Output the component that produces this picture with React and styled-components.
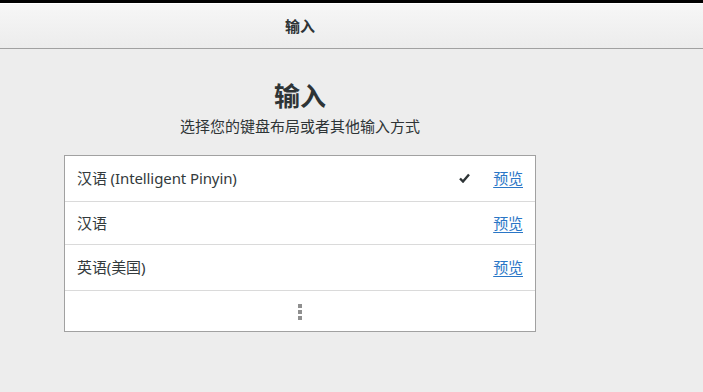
import React from "react";
import styled, { createGlobalStyle } from "styled-components";

const Global = createGlobalStyle`
  html, body { margin: 0; padding: 0; background: #ededed; }
  body { font-family: "Noto Sans", "Noto Sans CJK SC", sans-serif; color: #2e3436; }
`;

const Page = styled.div`
  width: 703px;
  height: 392px;
  display: flex;
  flex-direction: column;
  background: #ededed;
  border-top: 3px solid #000;
  box-sizing: border-box;
  overflow: hidden;
`;

const HeaderBar = styled.header`
  height: 45px;
  flex: none;
  display: flex;
  align-items: center;
  background: linear-gradient(#f7f7f7, #ececec);
  border-bottom: 1px solid #a1a1a1;
  box-shadow: inset 0 1px 0 #ffffff;
`;

const Column = styled.div`
  width: 600px;
  display: flex;
  flex-direction: column;
  align-items: center;
`;

const HeaderTitle = styled.h1`
  margin: 0;
  font-size: 15px;
  font-weight: bold;
  color: #2e3436;
`;

const Content = styled(Column)`
  padding-top: 29px;
`;

const Title = styled.h2`
  margin: 0;
  font-size: 26px;
  line-height: 36px;
  font-weight: bold;
  color: #2e3436;
`;

const Subtitle = styled.p`
  margin: 2px 0 0;
  font-size: 15px;
  line-height: 20px;
  color: #2e3436;
`;

const List = styled.div`
  margin-top: 19px;
  width: 470px;
  background: #fff;
  border: 1px solid #a1a1a1;
  display: flex;
  flex-direction: column;
`;

const Row = styled.div`
  height: ${(p) => p.$h}px;
  box-sizing: border-box;
  display: flex;
  align-items: center;
  padding: 0 12px 2px 12px;
  font-size: 15px;
  letter-spacing: -0.1px;
  color: #333a3c;
  border-top: ${(p) => (p.$first ? "none" : "1px solid #dadada")};
`;

const Label = styled.span`
  flex: 1;
`;

const Check = styled.svg`
  width: 11px;
  height: 10px;
  margin-right: 23px;
`;

const Preview = styled.a`
  color: #2a76c6;
  text-decoration: underline;
  text-underline-offset: 3px;
  cursor: pointer;
`;

const MoreRow = styled.div`
  height: 41px;
  box-sizing: border-box;
  display: flex;
  align-items: center;
  justify-content: center;
  border-top: 1px solid #dadada;
`;

const Dots = styled.div`
  display: flex;
  flex-direction: column;
  gap: 2px;
  margin-top: 1px;
`;

const Dot = styled.span`
  width: 4px;
  height: 4px;
  background: #8f8f8f;
`;

const items = [
  { label: "汉语 (Intelligent Pinyin)", checked: true, h: 45 },
  { label: "汉语", h: 43 },
  { label: "英语(美国)", h: 46 },
];

export default function App() {
  return (
    <>
      <Global />
      <Page>
        <HeaderBar>
          <Column>
            <HeaderTitle>输入</HeaderTitle>
          </Column>
        </HeaderBar>
        <Content>
          <Title>输入</Title>
          <Subtitle>选择您的键盘布局或者其他输入方式</Subtitle>
          <List>
            {items.map((it, i) => (
              <Row key={i} $first={i === 0} $h={it.h}>
                <Label>{it.label}</Label>
                {it.checked && (
                  <Check viewBox="0 0 11 10">
                    <path d="M1 5.5 L4 8.5 L10 1.5" fill="none" stroke="#2e3436" strokeWidth="2.4" />
                  </Check>
                )}
                <Preview>预览</Preview>
              </Row>
            ))}
            <MoreRow>
              <Dots>
                <Dot />
                <Dot />
                <Dot />
              </Dots>
            </MoreRow>
          </List>
        </Content>
      </Page>
    </>
  );
}
